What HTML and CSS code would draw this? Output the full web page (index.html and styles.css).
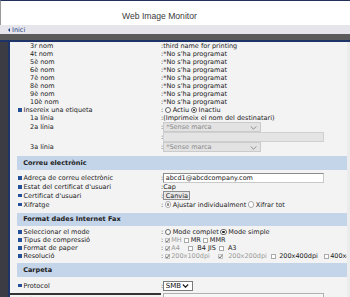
FILE: index.html
```html
<!DOCTYPE html>
<html lang="ca">
<head>
<meta charset="utf-8">
<title>Web Image Monitor</title>
<link rel="stylesheet" href="styles.css">
</head>
<body>
<div class="top"><span class="title">Web Image Monitor</span></div>
<div class="nav"><span class="tri"></span><span class="link">Inici</span></div>
<div class="band"></div>
<div class="main">
  <div class="rail"></div>
  <div class="panel">
    <div class="row"><div class="lab sub">3r nom</div><div class="val">:third name for printing</div></div>
    <div class="row"><div class="lab sub">4t nom</div><div class="val">:*No s'ha programat</div></div>
    <div class="row"><div class="lab sub">5è nom</div><div class="val">:*No s'ha programat</div></div>
    <div class="row"><div class="lab sub">6è nom</div><div class="val">:*No s'ha programat</div></div>
    <div class="row"><div class="lab sub">7è nom</div><div class="val">:*No s'ha programat</div></div>
    <div class="row"><div class="lab sub">8è nom</div><div class="val">:*No s'ha programat</div></div>
    <div class="row"><div class="lab sub">9è nom</div><div class="val">:*No s'ha programat</div></div>
    <div class="row"><div class="lab sub">10è nom</div><div class="val">:*No s'ha programat</div></div>
    <div class="row"><div class="lab"><span class="bul"></span>Insereix una etiqueta</div><div class="val">:<span class="radio"></span><span class="ot">Actiu</span><span class="radio on"></span><span class="ot">Inactiu</span></div></div>
    <div class="row"><div class="lab sub">1a línia</div><div class="val">:(Imprimeix el nom del destinatari)</div></div>
    <div class="row tall"><div class="lab sub">2a línia</div><div class="val">:<span class="sel dis">*Sense marca<svg class="chev" viewBox="0 0 8 5" width="7" height="4"><path d="M0.5 0.5L4 4L7.5 0.5" fill="none" stroke="#777" stroke-width="1"/></svg></span></div></div>
    <div class="row tall"><div class="lab"></div><div class="val">:<span class="inp dis"></span></div></div>
    <div class="row tall"><div class="lab sub">3a línia</div><div class="val">:<span class="sel dis">*Sense marca<svg class="chev" viewBox="0 0 8 5" width="7" height="4"><path d="M0.5 0.5L4 4L7.5 0.5" fill="none" stroke="#777" stroke-width="1"/></svg></span></div></div>

    <div class="head h1">Correu electrònic</div>
    <div class="row tall"><div class="lab"><span class="bul"></span>Adreça de correu electrònic</div><div class="val">:<span class="inp">abcd1@abcdcompany.com</span></div></div>
    <div class="row"><div class="lab"><span class="bul"></span>Estat del certificat d'usuari</div><div class="val">:Cap</div></div>
    <div class="row mid"><div class="lab"><span class="bul"></span>Certificat d'usuari</div><div class="val">:<span class="btn">Canvia</span></div></div>
    <div class="row mid"><div class="lab"><span class="bul"></span>Xifratge</div><div class="val">:<span class="radio on dim"></span><span class="ot">Ajustar individualment</span><span class="radio dim"></span><span class="ot">Xifrar tot</span></div></div>

    <div class="head h2">Format dades Internet Fax</div>
    <div class="row first"><div class="lab"><span class="bul"></span>Seleccionar el mode</div><div class="val">:<span class="radio"></span><span class="ot">Mode complet</span><span class="radio on"></span><span class="ot">Mode simple</span></div></div>
    <div class="row"><div class="lab"><span class="bul"></span>Tipus de compressió</div><div class="val">:<span class="cb on"><svg viewBox="0 0 6 6" width="5" height="5"><path d="M0.8 3.2L2.4 4.8L5.4 0.8" fill="none" stroke="#666" stroke-width="1"/></svg></span><span class="ct grey g1">MH</span><span class="cb"></span><span class="ct g1">MR</span><span class="cb"></span><span class="ct">MMR</span></div></div>
    <div class="row"><div class="lab"><span class="bul"></span>Format de paper</div><div class="val">:<span class="cb on"><svg viewBox="0 0 6 6" width="5" height="5"><path d="M0.8 3.2L2.4 4.8L5.4 0.8" fill="none" stroke="#666" stroke-width="1"/></svg></span><span class="ct grey g2">A4</span><span class="cb"></span><span class="ct wide g3">B4 JIS</span><span class="cb"></span><span class="ct wide">A3</span></div></div>
    <div class="row"><div class="lab"><span class="bul"></span>Resolució</div><div class="val">:<span class="cell"><span class="cb on"><svg viewBox="0 0 6 6" width="5" height="5"><path d="M0.8 3.2L2.4 4.8L5.4 0.8" fill="none" stroke="#666" stroke-width="1"/></svg></span><span class="ct grey">200x100dpi</span></span><span class="cell"><span class="cb on"><svg viewBox="0 0 6 6" width="5" height="5"><path d="M0.8 3.2L2.4 4.8L5.4 0.8" fill="none" stroke="#666" stroke-width="1"/></svg></span><span class="ct grey gap6">200x200dpi</span></span><span class="cell"><span class="cb"></span><span class="ct gap3">200x400dpi</span></span><span class="cell"><span class="cb"></span><span class="ct">400x400dpi</span></span></div></div>

    <div class="head h3">Carpeta</div>
    <div class="row tall proto"><div class="lab"><span class="bul"></span>Protocol</div><div class="val">:<span class="smb">SMB<svg class="chev2" viewBox="0 0 8 5" width="7" height="4"><path d="M0.7 0.7L4 4L7.3 0.7" fill="none" stroke="#222" stroke-width="1.6"/></svg></span></div></div>
    <div class="row tall cut"><div class="lab"><span class="bul"></span>Número de port</div><div class="val"><span class="inp lite"></span></div></div>
  </div>
  <div class="rail-r"></div>
</div>
</body>
</html>
```

FILE: styles.css
```css
html, body {
  margin: 0;
  padding: 0;
}
body {
  width: 350px;
  height: 297px;
  overflow: hidden;
  background: #3c3c44;
  font-family: "DejaVu Sans", sans-serif;
  font-size: 6.5px;
  color: #222;
}
.top {
  height: 24px;
  background: #fff;
  border-top: 1px solid #23305a;
  border-left: 1px solid #9a9a9a;
  box-sizing: content-box;
}
.title {
  display: block;
  padding: 10px 0 0 121px;
  line-height: 10px;
  font-family: "Liberation Sans", Arial, sans-serif;
  font-size: 8.6px;
  color: #3c3c3c;
}
.nav {
  height: 9px;
  background: #e5e5eb;
  display: flex;
  align-items: center;
  padding-left: 8px;
}
.tri {
  width: 0;
  height: 0;
  border-right: 2.5px solid #233f86;
  border-top: 2px solid transparent;
  border-bottom: 2px solid transparent;
  margin-right: 2px;
}
.link {
  color: #233f86;
  font-size: 6.5px;
}
.band {
  height: 6px;
  background: #5b5b5b;
  border-bottom: 2px solid #1e3368;
}
.main {
  display: flex;
  height: 255px;
}
.rail {
  width: 8px;
  flex: none;
  background: #3c3c44;
}
.panel {
  width: 337px;
  flex: none;
  border-left: 2px solid #1e3368;
  background: #f3f3f3;
  overflow: hidden;
}
.rail-r {
  flex: 1;
  background: #ececec;
}
.row {
  display: flex;
  align-items: center;
  height: 8px;
  white-space: nowrap;
}
.row.tall { height: 10px; }
.row.mid { height: 9px; }
.row.first { margin-top: 2px; }
.row.proto { margin-top: 4px; }
.lab {
  width: 143px;
  flex: none;
  padding-left: 8px;
  display: flex;
  align-items: center;
}
.lab.sub { padding-left: 20px; width: 131px; }
.bul {
  width: 3.5px;
  height: 3.5px;
  background: #24509a;
  margin-right: 2px;
  flex: none;
}
.val {
  display: flex;
  align-items: center;
}
.radio {
  width: 4.5px;
  height: 4.5px;
  border: 0.8px solid #666;
  border-radius: 50%;
  background: #fff;
  margin-left: 1.5px;
  position: relative;
  flex: none;
}
.radio.on::after {
  content: "";
  position: absolute;
  left: 1.1px;
  top: 1.1px;
  width: 2.3px;
  height: 2.3px;
  border-radius: 50%;
  background: #222;
}
.radio.dim { border-color: #aaa; }
.radio.dim.on::after { background: #888; }
.ot { margin-left: 1.5px; }
.sel {
  position: relative;
  box-sizing: border-box;
  width: 98px;
  height: 10px;
  padding-left: 2px;
  display: flex;
  align-items: center;
  border: 1px solid #cacaca;
}
.sel.dis {
  background: #e2e2e2;
  color: #8a8a8a;
}
.chev {
  position: absolute;
  right: 3px;
  top: 2.5px;
}
.inp {
  box-sizing: border-box;
  width: 161px;
  height: 9.5px;
  padding-left: 1.5px;
  display: flex;
  align-items: center;
  background: #fff;
  border: 1px solid #8c8c8c;
  border-right-color: #c8c8c8;
  border-bottom-color: #c8c8c8;
}
.inp.dis {
  background: #e4e4e4;
  border-color: #d0d0d0;
  height: 10px;
}
.inp.lite {
  margin-left: 2px;
  border-color: #b0b0b0;
  background: #f7f7f7;
}
.btn {
  box-sizing: border-box;
  height: 8.5px;
  padding: 0 1.5px;
  display: flex;
  align-items: center;
  background: #e8e8e8;
  border: 1px solid #8e8e8e;
}
.head {
  margin-left: 6.7px;
  height: 14px;
  background: #c4d4e9;
  font-weight: bold;
  display: flex;
  align-items: center;
  padding-left: 6.5px;
  color: #1c1c1c;
}
.h1 { margin-top: 4px; margin-bottom: 3px; }
.h2 { margin-top: 3.5px; height: 13.5px; }
.h3 { margin-top: 2.5px; }
.cb {
  box-sizing: border-box;
  width: 5px;
  height: 5px;
  border: 0.8px solid #aaa;
  background: #fff;
  margin-left: 1.5px;
  display: flex;
  align-items: center;
  justify-content: center;
  flex: none;
}
.cb.on {
  background: #ededed;
  border-color: #c4c4c4;
}
.cb.on svg { flex: none; }
.ct { margin-left: 1.5px; margin-right: 1px; }
.ct.grey { color: #9a9a9a; }
.ct.g1 { margin-right: 1px; }
.ct.g2 { margin-right: 7px; }
.ct.wide { margin-left: 4px; }
.ct.g3 { margin-right: 1.5px; }
.cell {
  width: 53px;
  display: flex;
  align-items: center;
  flex: none;
}
.ct.gap6 { margin-left: 5.5px; }
.ct.gap3 { margin-left: 3.5px; }
.smb {
  position: relative;
  box-sizing: border-box;
  width: 30px;
  height: 10px;
  padding-left: 1.5px;
  display: flex;
  align-items: center;
  background: #fff;
  border: 1px solid #7a7a7a;
  font-size: 7px;
  color: #111;
}
.chev2 {
  position: absolute;
  right: 3px;
  top: 2.6px;
}
.row.cut {
  margin-top: 2px;
  align-items: flex-start;
}
.row.cut .lab {
  border-top: 2px solid #333;
  margin-left: -2px;
  padding-left: 10px;
  padding-top: 1px;
  color: #666;
}
.row.cut .val { padding-top: 0; }
```
